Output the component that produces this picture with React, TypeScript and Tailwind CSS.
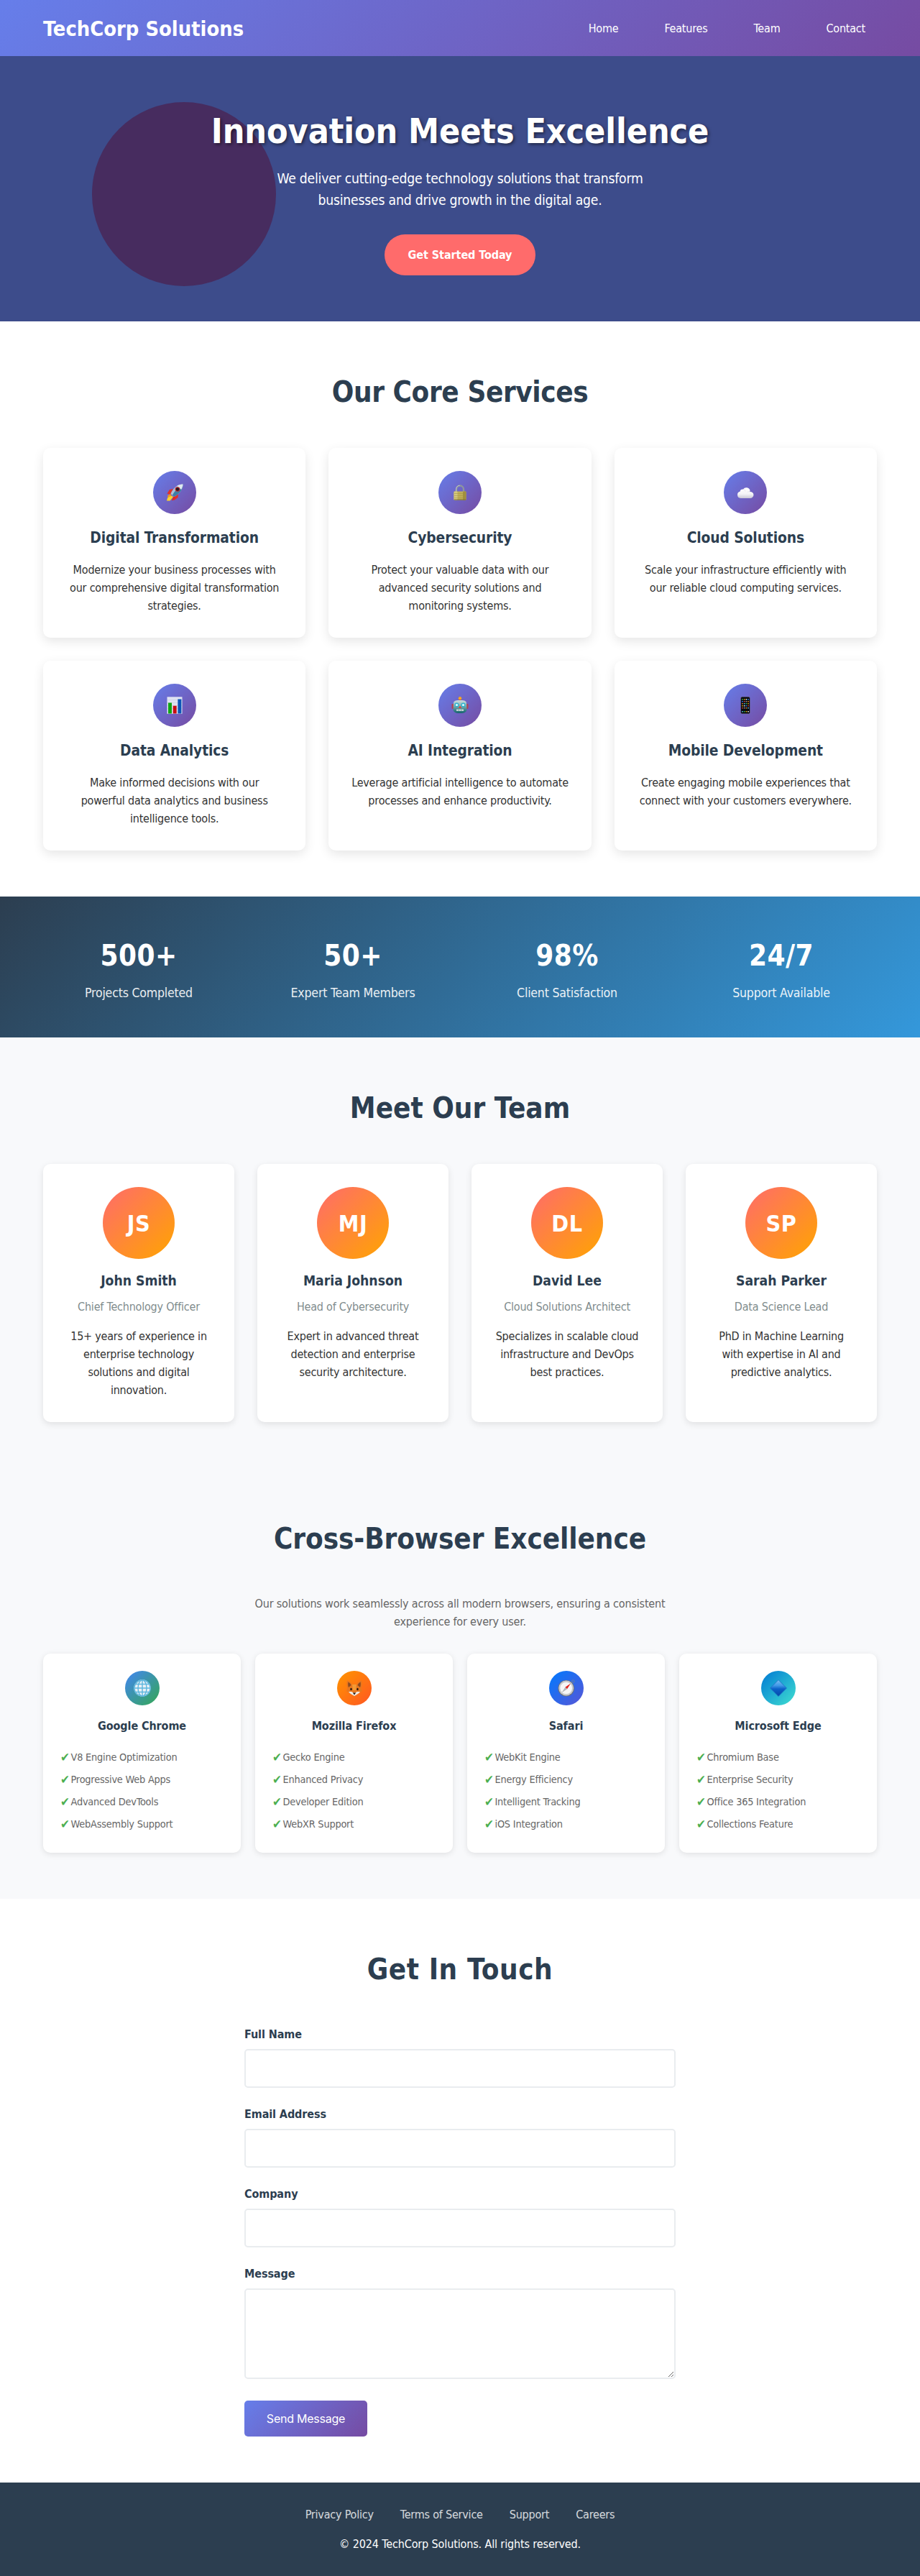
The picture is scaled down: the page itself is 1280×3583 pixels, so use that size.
import type { ReactNode } from "react";

function Rocket() {
  return (
    <svg viewBox="0 0 24 24" className="size-6">
      <path d="M6 15 1.5 13.5 5 8l5-1zM9.500 18 11 23l5.500-4 .5-5z" fill="#e0302a" />
      <path d="M2 16.500 6 14l1.500 2L3 20z" fill="#f59a1b" />
      <path d="M7.500 16.500 10 18l-4.500 5.500L1 23.500l1-4z" fill="#fbd22e" />
      <path d="M10 18.500 13 18l-3 5H8z" fill="#e8241c" />
      <path d="M23.500.5C17 .5 11 4 6.500 13.500l4.500 4.500C20 13.500 23.500 7 23.500.5z" fill="#a9c3d6" />
      <path d="M23.500.5c-5 3-11 8.500-14.500 15l2 2.500C20 13.500 23.500 7 23.500.5z" fill="#3d7ea6" />
      <path d="M23.500.5c-3 0-5.500.8-8 2.300L21 8c1.600-2.500 2.500-5 2.500-7.500z" fill="#dfe9f0" />
      <circle cx="16" cy="7.500" r="3.300" fill="#c9252b" />
      <circle cx="16" cy="7.500" r="2.200" fill="#1d1d28" />
    </svg>
  );
}

function Lock() {
  return (
    <svg viewBox="0 0 24 24" className="size-6">
      <path d="M7 12V7.500a5 5 0 0 1 10 0V12" fill="none" stroke="#8d959e" strokeWidth="2.300" />
      <path d="M6.600 11V7.300a5.300 5.300 0 0 1 5-5" fill="none" stroke="#c9d0d6" strokeWidth="0.800" />
      <rect x="3.500" y="10.500" width="17" height="12" rx="1.300" fill="#bfae58" />
      <rect x="3.500" y="10.500" width="5" height="12" rx="1.300" fill="#d3c77e" />
      <rect x="16" y="10.500" width="4.500" height="12" rx="1.300" fill="#a28f3e" />
      <path d="M4 13.500h16M4 16.500h16M4 19.500h16" stroke="#9f8e3e" strokeWidth="0.500" />
      <path d="M4 22h16" stroke="#7d6e2c" strokeWidth="1" />
    </svg>
  );
}

function Cloud() {
  return (
    <svg viewBox="0 0 24 24" className="size-6">
      <defs>
        <linearGradient id="cloud" x1="0" y1="0" x2="0" y2="1">
          <stop offset="0" stopColor="#ffffff" />
          <stop offset="0.600" stopColor="#f4f4f7" />
          <stop offset="1" stopColor="#c9c8d6" />
        </linearGradient>
      </defs>
      <path
        d="M5.500 20A5 5 0 0 1 1 15.200a4.600 4.600 0 0 1 3.500-4.500A3.700 3.700 0 0 1 9 7.500 5.300 5.300 0 0 1 18.500 9c0 .8 0 1.300-.3 2A4.600 4.600 0 0 1 23.500 15.500 4.800 4.800 0 0 1 18.500 20z"
        fill="url(#cloud)"
      />
      <path d="M9 7.500c1.800.2 3 1.500 3 3M18.200 11c-1.500-.5-2.700-.2-3.500.5" fill="none" stroke="#dcdce4" strokeWidth="0.700" />
    </svg>
  );
}

function Chart() {
  return (
    <svg viewBox="0 0 24 24" className="size-6">
      <rect x="1.500" y="0.300" width="21" height="23.500" fill="#dfe3f2" />
      <path d="M2 4.500h20M2 8.500h20M2 12.500h20M2 16.500h20M2 20.500h20" stroke="#c3cadf" strokeWidth="0.500" />
      <rect x="3" y="8.500" width="5" height="15" fill="#10a613" />
      <rect x="9.700" y="12.700" width="5" height="10.800" fill="#c80d12" />
      <rect x="16.400" y="3.500" width="5" height="20" fill="#0c55b8" />
    </svg>
  );
}

function Robot() {
  return (
    <svg viewBox="0 0 24 24" className="size-6">
      <defs>
        <linearGradient id="robot" x1="0" y1="0" x2="0" y2="1">
          <stop offset="0" stopColor="#cfdfe0" />
          <stop offset="0.500" stopColor="#6fa5ab" />
          <stop offset="1" stopColor="#12646c" />
        </linearGradient>
      </defs>
      <rect x="10.500" y="3" width="3" height="3.500" fill="#b5403c" />
      <circle cx="12" cy="2.300" r="2.200" fill="#f5a623" />
      <rect x="0.500" y="10" width="3" height="7" rx="1.200" fill="#b04352" />
      <rect x="20.500" y="10" width="3" height="7" rx="1.200" fill="#b04352" />
      <path d="M3 9c0-2.500 2-4 9-4s9 1.500 9 4l.5 8c0 4-2.500 6-9.500 6s-9.500-2-9.500-6z" fill="url(#robot)" />
      <circle cx="7.500" cy="11.500" r="3" fill="#2fb5cf" />
      <circle cx="16.500" cy="11.500" r="3" fill="#2fb5cf" />
      <circle cx="7.500" cy="11.500" r="1.600" fill="#eafcff" />
      <circle cx="16.500" cy="11.500" r="1.600" fill="#eafcff" />
      <path d="M12 12.500 14 16h-4z" fill="#df4536" />
      <rect x="7" y="17.500" width="10" height="2.500" rx="1" fill="#e0e5e5" />
      <path d="M9.500 17.500V20M12 17.500V20M14.500 17.500V20" stroke="#40797f" strokeWidth="0.700" />
    </svg>
  );
}

const APP_COLORS = ["#35c759", "#f2b705", "#ffffff", "#2b8cff", "#e5483f", "#9b9ba5", "#ff8a1f", "#5ac8fa"];

function Phone() {
  return (
    <svg viewBox="0 0 24 24" className="size-6">
      <rect x="5.500" y="0.200" width="13" height="23.600" rx="1.800" fill="#4b4a50" />
      <rect x="6" y="0.700" width="12" height="22.600" rx="1.500" fill="#08080c" />
      {[3, 6, 9, 12, 15, 20].map((y, row) =>
        [7.2, 9.900, 12.600, 15.300].map((x, col) => (
          <rect key={`${x}-${y}`} x={x} y={y} width="1.500" height="1.500" fill={APP_COLORS[(row * 3 + col) % 8]} />
        )),
      )}
    </svg>
  );
}

function Globe() {
  return (
    <svg viewBox="0 0 24 24" className="size-6">
      <circle cx="12" cy="12" r="11.700" fill="#eaf1f6" />
      <g fill="none" stroke="#5cb6de" strokeWidth="1.400">
        <circle cx="12" cy="12" r="11.100" />
        <ellipse cx="12" cy="12" rx="6" ry="11.100" />
        <path d="M12 1v22M1 12h22M3 6.500h18M3 17.500h18" />
      </g>
    </svg>
  );
}

function Fox() {
  return (
    <svg viewBox="0 0 24 24" className="size-6">
      <path d="M2 1.500c3 .5 5.500 3 7 5.500h6c1.500-2.500 4-5 7-5.500 1 4 .8 8-.5 11L23 16l-6 4-5 3-5-3-6-4 1.500-3.500C1.200 9.500 1 5.500 2 1.500z" fill="#e8781f" />
      <path d="M3.500 3.500C5.500 4.500 7 6.500 7.500 8L4 11C3 8.500 3 6 3.500 3.500zM20.500 3.500C18.500 4.500 17 6.500 16.500 8l3.500 3c1-2.500 1-5 .5-7.500z" fill="#8a4a22" />
      <path d="M9 7h6l-1 8h-4z" fill="#f39a35" />
      <path d="M4 17.500c2.500-.7 4.500-.5 6.500 1h3c2-1.500 4-1.700 6.500-1L17 20l-5 3-5-3z" fill="#f2ece4" />
      <ellipse cx="7.500" cy="13.500" rx="1.200" ry="1.700" fill="#20160f" />
      <ellipse cx="16.500" cy="13.500" rx="1.200" ry="1.700" fill="#20160f" />
      <path d="M9.800 18.500h4.400L12 21.500z" fill="#241a16" />
    </svg>
  );
}

function Compass() {
  return (
    <svg viewBox="0 0 24 24" className="size-6">
      <circle cx="21.300" cy="2.600" r="1.800" fill="none" stroke="#7a8391" strokeWidth="0.800" />
      <circle cx="11.700" cy="12.300" r="11.300" fill="#70747b" />
      <circle cx="11.700" cy="12" r="10.400" fill="#cfd0d2" />
      <circle cx="11.700" cy="12" r="8.800" fill="#f6f6f6" stroke="#a9abae" strokeWidth="0.600" />
      <path d="M18 5.500 13 13.300l-2.600-2.600z" fill="#e0201c" />
      <path d="M5.400 18.500 10.400 10.700l2.600 2.600z" fill="#b3b5b8" />
    </svg>
  );
}

function Diamond() {
  return (
    <svg viewBox="0 0 24 24" className="size-6">
      <defs>
        <linearGradient id="diamond" x1="0" y1="0" x2="0" y2="1">
          <stop offset="0" stopColor="#7cc0f4" />
          <stop offset="0.350" stopColor="#3f97e6" />
          <stop offset="0.550" stopColor="#0b62c9" />
          <stop offset="1" stopColor="#0549a8" />
        </linearGradient>
      </defs>
      <path d="M12 .6 23.400 12 12 23.400.6 12z" fill="url(#diamond)" stroke="#1a6fc4" strokeWidth="0.800" />
    </svg>
  );
}

const SERVICES = [
  { icon: <Rocket />, title: "Digital Transformation", text: "Modernize your business processes with\nour comprehensive digital transformation\nstrategies." },
  { icon: <Lock />, title: "Cybersecurity", text: "Protect your valuable data with our\nadvanced security solutions and\nmonitoring systems." },
  { icon: <Cloud />, title: "Cloud Solutions", text: "Scale your infrastructure efficiently with\nour reliable cloud computing services." },
  { icon: <Chart />, title: "Data Analytics", text: "Make informed decisions with our\npowerful data analytics and business\nintelligence tools." },
  { icon: <Robot />, title: "AI Integration", text: "Leverage artificial intelligence to automate\nprocesses and enhance productivity." },
  { icon: <Phone />, title: "Mobile Development", text: "Create engaging mobile experiences that\nconnect with your customers everywhere." },
];

const STATS = [
  ["500+", "Projects Completed"],
  ["50+", "Expert Team Members"],
  ["98%", "Client Satisfaction"],
  ["24/7", "Support Available"],
];

const TEAM = [
  { initials: "JS", name: "John Smith", role: "Chief Technology Officer", text: "15+ years of experience in\nenterprise technology\nsolutions and digital\ninnovation." },
  { initials: "MJ", name: "Maria Johnson", role: "Head of Cybersecurity", text: "Expert in advanced threat\ndetection and enterprise\nsecurity architecture." },
  { initials: "DL", name: "David Lee", role: "Cloud Solutions Architect", text: "Specializes in scalable cloud\ninfrastructure and DevOps\nbest practices." },
  { initials: "SP", name: "Sarah Parker", role: "Data Science Lead", text: "PhD in Machine Learning\nwith expertise in AI and\npredictive analytics." },
];

const BROWSERS = [
  { icon: <Globe />, tint: "bg-[linear-gradient(135deg,#4285f4,#34a853)]", name: "Google Chrome", items: ["V8 Engine Optimization", "Progressive Web Apps", "Advanced DevTools", "WebAssembly Support"] },
  { icon: <Fox />, tint: "bg-[linear-gradient(135deg,#ff9500,#ff5722)]", name: "Mozilla Firefox", items: ["Gecko Engine", "Enhanced Privacy", "Developer Edition", "WebXR Support"] },
  { icon: <Compass />, tint: "bg-[linear-gradient(135deg,#007aff,#5856d6)]", name: "Safari", items: ["WebKit Engine", "Energy Efficiency", "Intelligent Tracking", "iOS Integration"] },
  { icon: <Diamond />, tint: "bg-[linear-gradient(135deg,#0078d4,#40e0d0)]", name: "Microsoft Edge", items: ["Chromium Base", "Enterprise Security", "Office 365 Integration", "Collections Feature"] },
];

function Heading({ tracking, children }: { tracking: string; children: ReactNode }) {
  return (
    <h2 className={`mb-12 h-16 pt-0.5 text-center text-[40px] leading-[64px] font-bold text-[#2c3e50] ${tracking}`}>
      {children}
    </h2>
  );
}

function Field({ label, children }: { label: string; children: ReactNode }) {
  return (
    <label className="mb-6 block">
      <span className="mb-2 block font-bold tracking-[-0.006em] text-[#2c3e50]">{label}</span>
      {children}
    </label>
  );
}

export default function App() {
  return (
    <div className="w-[1280px] bg-white font-['DejaVu_Sans_Condensed','DejaVu_Sans',sans-serif] text-base leading-[25px] tracking-[-0.013em] text-[#333]">
      <header className="flex h-[78px] items-center justify-between bg-[linear-gradient(135deg,#667eea_0%,#764ba2_100%)] px-[60px] text-white">
        <div className="pt-px text-[28.8px] leading-[46px] font-bold tracking-normal">TechCorp Solutions</div>
        <nav className="flex gap-8">
          {["Home", "Features", "Team", "Contact"].map((item) => (
            <a key={item} className="px-4">
              {item}
            </a>
          ))}
        </nav>
      </header>

      <section className="relative h-[369px] bg-[#3d4c8b] pt-16 text-center text-white">
        <div className="absolute top-16 left-32 size-64 rounded-full bg-[#472c5f]" />
        <div className="relative flex flex-col items-center">
          <h1 className="mb-4 h-[76px] pt-0.5 text-[48px] leading-[76px] font-bold tracking-[-0.002em] [text-shadow:2px_2px_4px_rgba(0,0,0,0.5)]">
            Innovation Meets Excellence
          </h1>
          <p className="mb-8 text-[19.2px] leading-[30px] whitespace-pre">
            {"We deliver cutting-edge technology solutions that transform\nbusinesses and drive growth in the digital age."}
          </p>
          <a className="flex h-[57px] w-[210px] items-center justify-center rounded-[28.5px] bg-[#ff6b6b] font-bold tracking-[-0.004em]">
            Get Started Today
          </a>
        </div>
      </section>

      <section className="px-[60px] py-16">
        <Heading tracking="tracking-[-0.01em]">Our Core Services</Heading>
        <div className="grid grid-cols-3 gap-8">
          {SERVICES.map((s) => (
            <div key={s.title} className="flex h-[264px] flex-col items-center rounded-[10px] bg-white pt-8 text-center shadow-[0_5px_15px_rgba(0,0,0,0.1)]">
              <div className="mb-4 flex size-[60px] items-center justify-center rounded-full bg-[linear-gradient(135deg,#667eea,#764ba2)]">
                {s.icon}
              </div>
              <h3 className="mb-4 h-[33px] pt-px text-[20.8px] leading-[33px] font-bold tracking-[-0.005em] text-[#2c3e50]">{s.title}</h3>
              <p className="whitespace-pre">{s.text}</p>
            </div>
          ))}
        </div>
      </section>

      <section className="grid h-[196px] grid-cols-4 gap-8 bg-[linear-gradient(135deg,#2c3e50,#3498db)] px-[60px] py-12 text-center text-white">
        {STATS.map(([value, label]) => (
          <div key={label}>
            <div className="mb-2 h-16 pt-0.5 text-[40px] leading-[64px] font-bold tracking-[0.01em]">{value}</div>
            <div className="text-[17.6px] leading-7 opacity-90">{label}</div>
          </div>
        ))}
      </section>

      <section className="bg-[#f8f9fb] px-[60px] py-16">
        <Heading tracking="tracking-normal">Meet Our Team</Heading>
        <div className="grid grid-cols-4 gap-8">
          {TEAM.map((m) => (
            <div key={m.name} className="flex h-[359px] flex-col items-center rounded-[10px] bg-white pt-8 text-center shadow-[0_3px_10px_rgba(0,0,0,0.1)]">
              <div className="mb-4 flex size-[100px] items-center justify-center rounded-full bg-[linear-gradient(135deg,#ff6b6b,#ffa500)] pt-0.5 text-[32px] font-bold tracking-[0.02em] text-white">
                {m.initials}
              </div>
              <h4 className="mb-2 text-[19.2px] leading-[30px] font-bold tracking-normal text-[#2c3e50]">{m.name}</h4>
              <p className="mb-4 text-[#7f8c8d]">{m.role}</p>
              <p className="whitespace-pre">{m.text}</p>
            </div>
          ))}
        </div>
      </section>

      <section className="bg-[#f8f9fb] px-[60px] py-16">
        <Heading tracking="tracking-[-0.002em]">Cross-Browser Excellence</Heading>
        <p className="mb-8 text-center tracking-[-0.011em] whitespace-pre text-[#666]">
          {"Our solutions work seamlessly across all modern browsers, ensuring a consistent\nexperience for every user."}
        </p>
        <div className="grid grid-cols-4 gap-5">
          {BROWSERS.map((b) => (
            <div key={b.name} className="flex h-[277px] flex-col items-center rounded-[10px] bg-white p-6 shadow-[0_2px_8px_rgba(0,0,0,0.1)]">
              <div className={`mb-4 flex size-12 shrink-0 items-center justify-center rounded-full ${b.tint}`}>{b.icon}</div>
              <h4 className="mb-4 font-bold tracking-[-0.006em] text-[#2c3e50]">{b.name}</h4>
              <ul className="w-full">
                {b.items.map((item) => (
                  <li key={item} className="flex h-[31px] items-center text-[14.4px] leading-[23px] text-[#666]">
                    <span className="w-[14.500px] text-[17px] text-[#4caf50]">✔</span>
                    {item}
                  </li>
                ))}
              </ul>
            </div>
          ))}
        </div>
      </section>

      <section className="px-[340px] py-16">
        <Heading tracking="tracking-[0.014em]">Get In Touch</Heading>
        <form>
          {["Full Name", "Email Address", "Company"].map((label) => (
            <Field key={label} label={label}>
              <input className="block h-[54px] w-full rounded-[5px] border-2 border-[#e9ecef] bg-white px-4" />
            </Field>
          ))}
          <Field label="Message">
            <textarea className="mb-[30px] block h-[126px] w-full resize-y rounded-[5px] border-2 border-[#e9ecef] bg-white p-4" />
          </Field>
          <button
            type="button"
            className="block h-[50px] w-[171px] rounded-[5px] bg-[linear-gradient(135deg,#667eea,#764ba2)] font-['Inter',sans-serif] text-base tracking-[-0.015em] text-white"
          >
            Send Message
          </button>
        </form>
      </section>

      <footer className="h-[130px] bg-[#2c3e50] py-8 text-center text-white">
        <div className="mb-4 flex justify-center gap-[37px] opacity-80">
          {["Privacy Policy", "Terms of Service", "Support", "Careers"].map((item) => (
            <a key={item}>{item}</a>
          ))}
        </div>
        <p className="tracking-[-0.008em]">© 2024 TechCorp Solutions. All rights reserved.</p>
      </footer>
    </div>
  );
}
